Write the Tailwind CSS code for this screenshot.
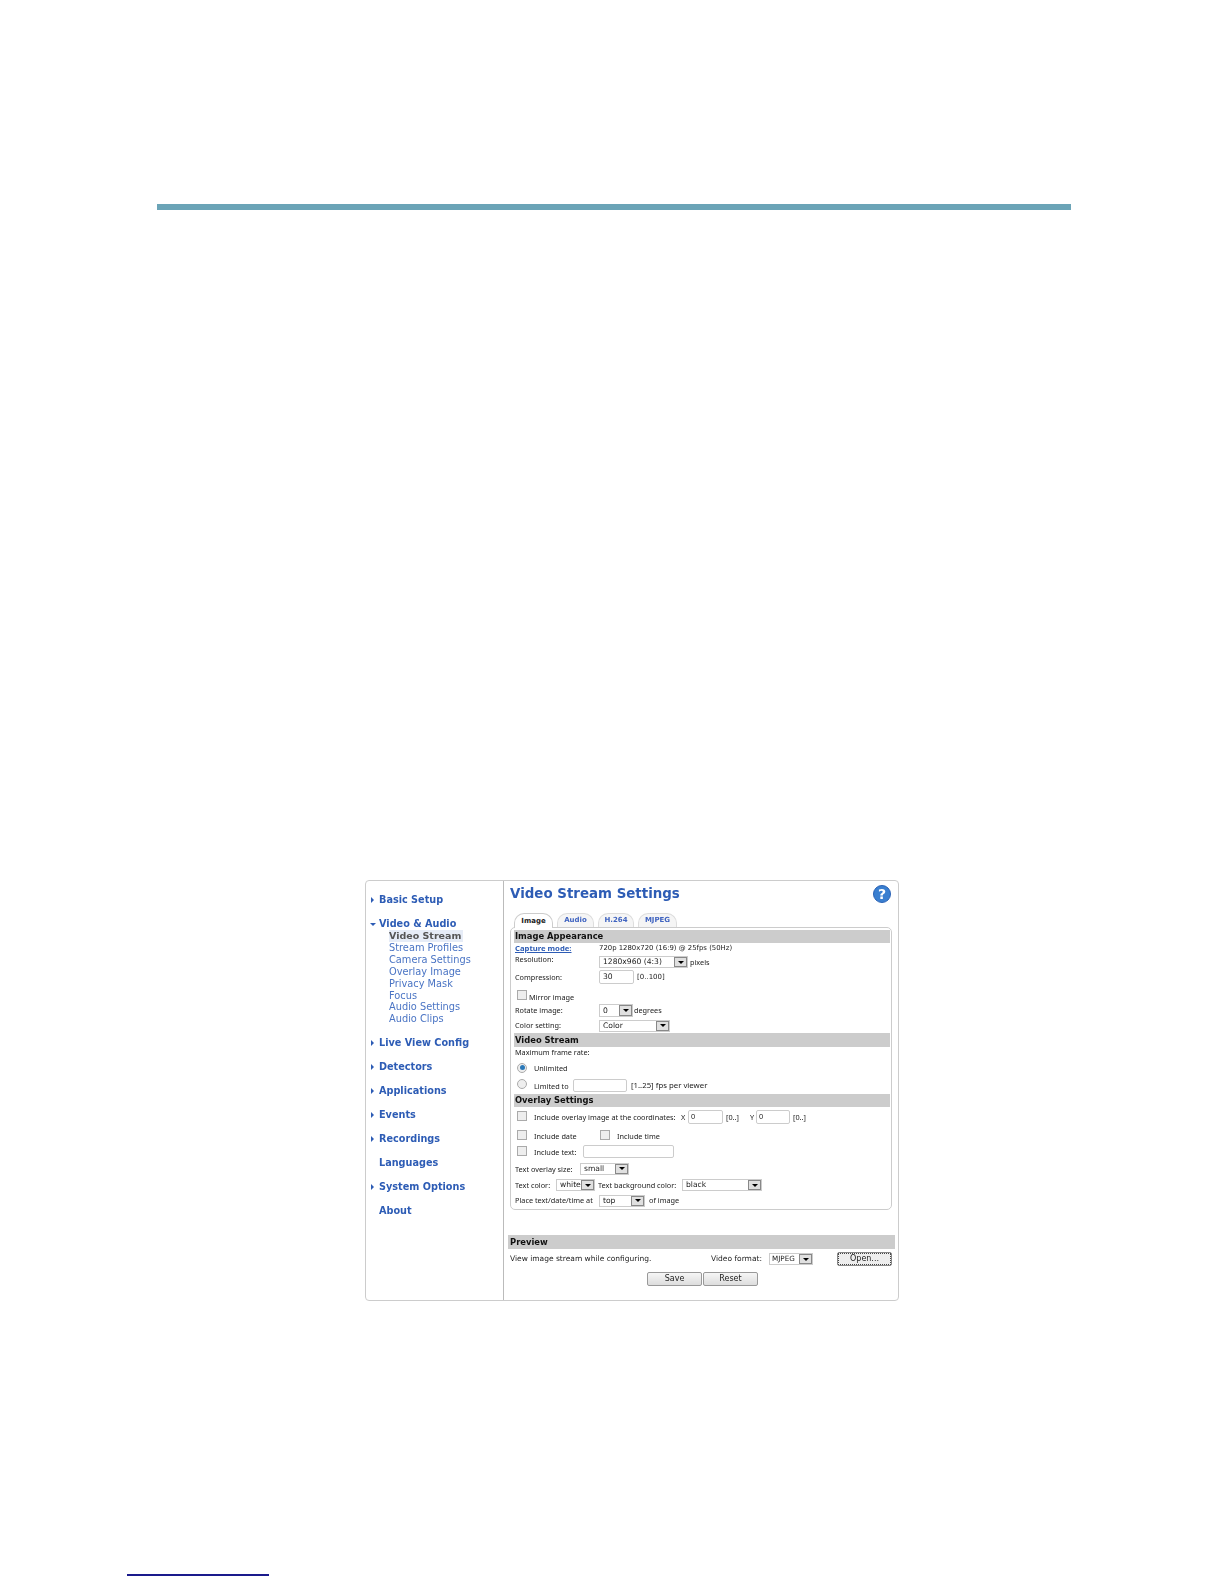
<!DOCTYPE html>
<html lang="en">
<head>
    <meta charset="UTF-8">
    <title>Video Stream Settings</title>
    <script src="https://cdn.jsdelivr.net/npm/@tailwindcss/browser@4"></script>
</head>
<body class="bg-white h-[1584px] overflow-hidden font-['DejaVu_Sans',sans-serif]">
    <div class="ml-[157px] mt-[204px] w-[914px] h-[6px] bg-[#6ba4b7]"></div>

    <div class="ml-[365px] mt-[670px] w-[534px] h-[421px] flex border border-[#cccccc] rounded-[4px] blur-[0.35px]">
        <!-- left menu -->
        <div class="w-[138px] shrink-0 border-r border-[#bbbbbb] pt-[13px] pl-[5px] text-[#2d5cb5] font-bold text-[9.7px] leading-[12px]">
            <div class="flex items-center h-[12px] mb-[12px]"><span class="w-[8px] shrink-0"><span class="block w-0 h-0 border-y-[3px] border-l-[3px] border-y-transparent border-l-[#2d5cb5]"></span></span>Basic Setup</div>
            <div class="flex items-center h-[12px]"><span class="w-[8px] shrink-0"><span class="block w-0 h-0 -ml-[1px] border-x-[3.5px] border-t-[3.5px] border-x-transparent border-t-[#2d5cb5]"></span></span>Video &amp; Audio</div>
            <div class="ml-[18px] mb-[12px] font-normal text-[9.8px] leading-[11.9px] text-[#4a74c4]">
                <div class="font-bold text-[9.5px] text-[#555555] bg-[#e6ecf7] w-[74px]">Video Stream</div>
                <div>Stream Profiles</div>
                <div>Camera Settings</div>
                <div>Overlay Image</div>
                <div>Privacy Mask</div>
                <div>Focus</div>
                <div>Audio Settings</div>
                <div>Audio Clips</div>
            </div>
            <div class="flex items-center h-[12px] mb-[12px]"><span class="w-[8px] shrink-0"><span class="block w-0 h-0 border-y-[3px] border-l-[3px] border-y-transparent border-l-[#2d5cb5]"></span></span>Live View Config</div>
            <div class="flex items-center h-[12px] mb-[12px]"><span class="w-[8px] shrink-0"><span class="block w-0 h-0 border-y-[3px] border-l-[3px] border-y-transparent border-l-[#2d5cb5]"></span></span>Detectors</div>
            <div class="flex items-center h-[12px] mb-[12px]"><span class="w-[8px] shrink-0"><span class="block w-0 h-0 border-y-[3px] border-l-[3px] border-y-transparent border-l-[#2d5cb5]"></span></span>Applications</div>
            <div class="flex items-center h-[12px] mb-[12px]"><span class="w-[8px] shrink-0"><span class="block w-0 h-0 border-y-[3px] border-l-[3px] border-y-transparent border-l-[#2d5cb5]"></span></span>Events</div>
            <div class="flex items-center h-[12px] mb-[12px]"><span class="w-[8px] shrink-0"><span class="block w-0 h-0 border-y-[3px] border-l-[3px] border-y-transparent border-l-[#2d5cb5]"></span></span>Recordings</div>
            <div class="flex items-center h-[12px] mb-[12px] pl-[8px]">Languages</div>
            <div class="flex items-center h-[12px] mb-[12px]"><span class="w-[8px] shrink-0"><span class="block w-0 h-0 border-y-[3px] border-l-[3px] border-y-transparent border-l-[#2d5cb5]"></span></span>System Options</div>
            <div class="flex items-center h-[12px] pl-[8px]">About</div>
        </div>

        <!-- settings -->
        <div class="flex-1 text-[7.3px] text-[#222222] font-['Noto_Sans',sans-serif]">
            <div class="h-[31px] flex items-center justify-between pl-[6px] pr-[7px] pb-[5px]">
                <span class="font-['DejaVu_Sans',sans-serif] font-bold text-[13.4px] text-[#2d5cb5]">Video Stream Settings</span>
                <span class="w-[18px] h-[18px] rounded-full bg-[#3a7fd0] border border-[#2a62b5] text-white font-['DejaVu_Sans',sans-serif] font-bold text-[14px] flex items-center justify-center">?</span>
            </div>

            <div class="h-[15px] flex items-end gap-[4px] pl-[10px] font-['DejaVu_Sans',sans-serif] font-bold text-[7px] text-[#3f63c0]">
                <div class="w-[39px] h-[15px] flex items-center justify-center rounded-t-[10px] border border-b-0 border-[#cccccc] bg-white text-[#222222] relative z-10 translate-y-[1px]">Image</div>
                <div class="w-[37px] h-[14px] flex items-center justify-center rounded-t-[10px] border border-b-0 border-[#dddddd] bg-[#f5f5f5]">Audio</div>
                <div class="w-[36px] h-[14px] flex items-center justify-center rounded-t-[10px] border border-b-0 border-[#dddddd] bg-[#f5f5f5]">H.264</div>
                <div class="w-[39px] h-[14px] flex items-center justify-center rounded-t-[10px] border border-b-0 border-[#dddddd] bg-[#f5f5f5]">MJPEG</div>
            </div>

            <div class="ml-[6px] w-[382px] h-[283px] border border-[#cccccc] rounded-[5px] pt-[2px] pl-[3px] pr-[1px]">
                <div class="h-[13px] bg-[#cccccc] pl-[1px] flex items-center font-['DejaVu_Sans',sans-serif] font-bold text-[8.4px] text-[#111111]">Image Appearance</div>

                <div class="h-[11px] flex items-center pl-[1px]"><span class="w-[84px] font-bold text-[7.7px] text-[#2d5cb5] underline">Capture mode:</span><span class="font-['DejaVu_Sans',sans-serif] text-[6.9px]">720p 1280x720 (16:9) @ 25fps (50Hz)</span></div>

                <div class="h-[15px] flex pl-[1px] pt-[1px]"><span class="w-[84px] leading-[9px]">Resolution:</span>
                    <div class="flex items-center gap-[2px] h-[12px] mt-[1px]">
                        <div class="w-[89px] h-[12px] flex border border-[#cccccc] font-['DejaVu_Sans',sans-serif] text-[7.6px] leading-[10px]"><span class="flex-1 pl-[3px]">1280x960 (4:3)</span><span class="w-[13px] h-full bg-[#e0e0e0] border border-[#888888] flex items-center justify-center"><span class="w-0 h-0 border-x-[3px] border-t-[3px] border-x-transparent border-t-black"></span></span></div>
                        <span>pixels</span>
                    </div>
                </div>

                <div class="h-[16px] flex items-center pl-[1px]"><span class="w-[84px]">Compression:</span>
                    <div class="w-[35px] h-[14px] border border-[#cccccc] rounded-[2px] pl-[3px] flex items-center font-['DejaVu_Sans',sans-serif] text-[7.6px]">30</div>
                    <span class="ml-[3px] font-['DejaVu_Sans',sans-serif] text-[7px]">[0..100]</span>
                </div>

                <div class="h-[18px] flex pl-[3px] pt-[5px]"><span class="w-[10px] h-[10px] border border-[#aaaaaa] bg-[#eeeeee]"></span><span class="ml-[2px] mt-[3px] leading-[9px]">Mirror image</span></div>

                <div class="h-[15px] flex items-center pl-[1px]"><span class="w-[84px]">Rotate image:</span>
                    <div class="w-[34px] h-[13px] flex border border-[#cccccc] font-['DejaVu_Sans',sans-serif] text-[7.6px] leading-[11px]"><span class="flex-1 pl-[3px]">0</span><span class="w-[13px] h-full bg-[#e0e0e0] border border-[#888888] flex items-center justify-center"><span class="w-0 h-0 border-x-[3px] border-t-[3px] border-x-transparent border-t-black"></span></span></div>
                    <span class="ml-[1px]">degrees</span>
                </div>

                <div class="h-[15px] flex items-center pl-[1px]"><span class="w-[84px]">Color setting:</span>
                    <div class="w-[71px] h-[12px] flex border border-[#cccccc] font-['DejaVu_Sans',sans-serif] text-[7.6px] leading-[10px]"><span class="flex-1 pl-[3px]">Color</span><span class="w-[13px] h-full bg-[#e0e0e0] border border-[#888888] flex items-center justify-center"><span class="w-0 h-0 border-x-[3px] border-t-[3px] border-x-transparent border-t-black"></span></span></div>
                </div>

                <div class="h-[14px] bg-[#cccccc] pl-[1px] flex items-center font-['DejaVu_Sans',sans-serif] font-bold text-[8.4px] text-[#111111]">Video Stream</div>
                <div class="h-[10px] flex items-center pl-[1px]">Maximum frame rate:</div>
                <div class="h-[19px] flex items-center pl-[3px] pt-[2px]"><span class="w-[10px] h-[10px] rounded-full border border-[#aaaaaa] bg-[#eeeeee] flex items-center justify-center"><span class="w-[5px] h-[5px] rounded-full bg-[#2a78b8]"></span></span><span class="ml-[7px] mt-[2px]">Unlimited</span></div>
                <div class="h-[18px] flex items-center pl-[3px]"><span class="w-[10px] h-[10px] rounded-full border border-[#aaaaaa] bg-[#eeeeee] -mt-[2px]"></span><span class="ml-[7px] w-[39px] mt-[2px]">Limited to</span>
                    <div class="w-[54px] h-[13px] border border-[#cccccc] rounded-[2px]"></div>
                    <span class="ml-[4px] mt-[2px] text-[7.8px]">[1..25] fps per viewer</span>
                </div>

                <div class="h-[13px] bg-[#cccccc] pl-[1px] flex items-center font-['DejaVu_Sans',sans-serif] font-bold text-[8.4px] text-[#111111]">Overlay Settings</div>
                <div class="h-[19px] flex items-center pl-[3px]"><span class="w-[10px] h-[10px] border border-[#aaaaaa] bg-[#eeeeee] -mt-[2px]"></span><span class="ml-[7px] w-[147px] mt-[2px]">Include overlay image at the coordinates:</span><span class="w-[7px] mt-[2px]">X</span>
                    <div class="w-[35px] h-[14px] border border-[#cccccc] rounded-[2px] pl-[2px] flex items-center">0</div>
                    <span class="ml-[3px] w-[24px] mt-[2px]">[0..]</span><span class="w-[6px] mt-[2px]">Y</span>
                    <div class="w-[34px] h-[14px] border border-[#cccccc] rounded-[2px] pl-[2px] flex items-center">0</div>
                    <span class="ml-[3px] mt-[2px]">[0..]</span>
                </div>
                <div class="h-[17px] flex items-center pl-[3px]"><span class="w-[10px] h-[10px] border border-[#aaaaaa] bg-[#eeeeee]"></span><span class="ml-[7px] w-[66px] mt-[4px]">Include date</span><span class="w-[10px] h-[10px] border border-[#aaaaaa] bg-[#eeeeee]"></span><span class="ml-[7px] mt-[4px]">Include time</span></div>
                <div class="h-[17px] flex items-center pl-[3px]"><span class="w-[10px] h-[10px] border border-[#aaaaaa] bg-[#eeeeee] -mt-[1px]"></span><span class="ml-[7px] w-[49px] mt-[2px]">Include text:</span>
                    <div class="w-[91px] h-[13px] border border-[#cccccc] rounded-[2px]"></div>
                </div>
                <div class="h-[17px] flex items-center pl-[1px]"><span class="w-[65px] mt-[1px]">Text overlay size:</span>
                    <div class="w-[49px] h-[12px] flex border border-[#cccccc] font-['DejaVu_Sans',sans-serif] text-[7.6px] leading-[10px]"><span class="flex-1 pl-[3px]">small</span><span class="w-[13px] h-full bg-[#e0e0e0] border border-[#888888] flex items-center justify-center"><span class="w-0 h-0 border-x-[3px] border-t-[3px] border-x-transparent border-t-black"></span></span></div>
                </div>
                <div class="h-[16px] flex items-center pl-[1px]"><span class="w-[41px] mt-[1px]">Text color:</span>
                    <div class="w-[39px] h-[12px] flex border border-[#cccccc] font-['DejaVu_Sans',sans-serif] text-[7.6px] leading-[10px]"><span class="flex-1 pl-[3px]">white</span><span class="w-[13px] h-full bg-[#e0e0e0] border border-[#888888] flex items-center justify-center"><span class="w-0 h-0 border-x-[3px] border-t-[3px] border-x-transparent border-t-black"></span></span></div>
                    <span class="ml-[3px] w-[84px] mt-[1px]">Text background color:</span>
                    <div class="w-[80px] h-[12px] flex border border-[#cccccc] font-['DejaVu_Sans',sans-serif] text-[7.6px] leading-[10px]"><span class="flex-1 pl-[3px]">black</span><span class="w-[13px] h-full bg-[#e0e0e0] border border-[#888888] flex items-center justify-center"><span class="w-0 h-0 border-x-[3px] border-t-[3px] border-x-transparent border-t-black"></span></span></div>
                </div>
                <div class="h-[15px] flex items-center pl-[1px]"><span class="w-[84px]">Place text/date/time at</span>
                    <div class="w-[46px] h-[12px] flex border border-[#cccccc] font-['DejaVu_Sans',sans-serif] text-[7.6px] leading-[10px]"><span class="flex-1 pl-[3px]">top</span><span class="w-[13px] h-full bg-[#e0e0e0] border border-[#888888] flex items-center justify-center"><span class="w-0 h-0 border-x-[3px] border-t-[3px] border-x-transparent border-t-black"></span></span></div>
                    <span class="ml-[4px]">of image</span>
                </div>
            </div>

            <div class="mt-[25px] ml-[4px] w-[387px] h-[14px] bg-[#cccccc] pl-[2px] flex items-center font-['DejaVu_Sans',sans-serif] font-bold text-[8.4px] text-[#111111]">Preview</div>
            <div class="h-[23px] flex items-center ml-[6px] pb-[3px] font-['DejaVu_Sans',sans-serif] text-[7.5px]">
                <span class="w-[201px]">View image stream while configuring.</span>
                <span class="w-[58px]">Video format:</span>
                <div class="w-[44px] h-[12px] flex border border-[#cccccc] text-[7.2px] leading-[10px]"><span class="flex-1 pl-[2px]">MJPEG</span><span class="w-[13px] h-full bg-[#e0e0e0] border border-[#888888] flex items-center justify-center"><span class="w-0 h-0 border-x-[3px] border-t-[3px] border-x-transparent border-t-black"></span></span></div>
                <div class="ml-[24px] w-[55px] h-[14px] border border-[#888888] rounded-[2px] bg-[#eeeeee] flex items-center justify-center text-[8px] outline-1 outline-dotted outline-[#444444] -outline-offset-2">Open...</div>
            </div>
            <div class="flex justify-center gap-[1px] ml-[3px] font-['DejaVu_Sans',sans-serif] text-[8px]">
                <div class="w-[55px] h-[14px] border border-[#999999] rounded-[2px] bg-gradient-to-b from-[#f6f6f6] to-[#dddddd] flex items-center justify-center">Save</div>
                <div class="w-[55px] h-[14px] border border-[#999999] rounded-[2px] bg-gradient-to-b from-[#f6f6f6] to-[#dddddd] flex items-center justify-center">Reset</div>
            </div>
        </div>
    </div>

    <div class="ml-[127px] mt-[273px] w-[142px] h-[2px] bg-[#1a1a8c]"></div>
</body>
</html>
